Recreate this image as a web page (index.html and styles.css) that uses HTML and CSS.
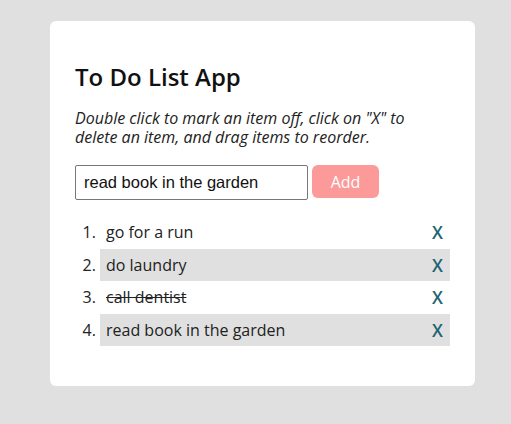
FILE: index.html
```html
<!DOCTYPE html>
<html>
<head>
<meta charset="utf-8">
<link rel="stylesheet" href="styles.css">
</head>
<body>
<div class="card">
  <h1 class="title">To Do List App</h1>
  <p class="hint">Double click to mark an item off, click on "X" to delete an item, and drag items to reorder.</p>
  <div class="form">
    <input class="field" type="text" value="read book in the garden">
    <button class="add">Add</button>
  </div>
  <ol class="list">
    <li class="item"><span class="text">go for a run</span><span class="del">X</span></li>
    <li class="item alt"><span class="text">do laundry</span><span class="del">X</span></li>
    <li class="item"><span class="text done">call dentist</span><span class="del">X</span></li>
    <li class="item alt"><span class="text">read book in the garden</span><span class="del">X</span></li>
  </ol>
</div>
</body>
</html>
```
FILE: styles.css
```css
html, body {
  margin: 0;
  padding: 0;
  background: #e0e0e0;
  font-family: "Open Sans", sans-serif;
  color: #222;
}
body {
  padding: 21px 0 0 50px;
}
.card {
  width: 375px;
  padding: 39px 25px 40px 25px;
  background: #fff;
  border-radius: 6px;
}
.title {
  margin: 0 0 15px 0;
  font-size: 24px;
  font-weight: 600;
  line-height: 34px;
  color: #111;
}
.hint {
  margin: 0 0 18px 0;
  font-size: 16px;
  font-style: italic;
  line-height: 19px;
  color: #222;
}
.form {
  display: flex;
  gap: 4px;
  align-items: flex-start;
  margin-bottom: 16px;
}
.field {
  box-sizing: border-box;
  width: 233px;
  height: 35px;
  margin: 0;
  padding: 0 8px;
  border: 1px solid #777;
  border-radius: 2px;
  font-family: "Liberation Sans", Arial, sans-serif;
  font-size: 16.5px;
  color: #111;
}
.add {
  box-sizing: border-box;
  width: 67px;
  height: 33px;
  border: none;
  border-radius: 6px;
  background: #fc9a9a;
  color: #fff;
  font-family: "Open Sans", sans-serif;
  font-size: 16px;
}
.list {
  margin: 0;
  padding-left: 25px;
  font-size: 16px;
}
.item {
  display: list-item;
  padding: 5px 7px 5px 6px;
  line-height: 22.5px;
  color: #222;
}
.item .text {
  display: inline-block;
}
.item .del {
  float: right;
  color: #1d6573;
  font-size: 17.5px;
  font-weight: 600;
}
.item.alt {
  background: #e0e0e0;
}
.done {
  text-decoration: line-through;
}
```
